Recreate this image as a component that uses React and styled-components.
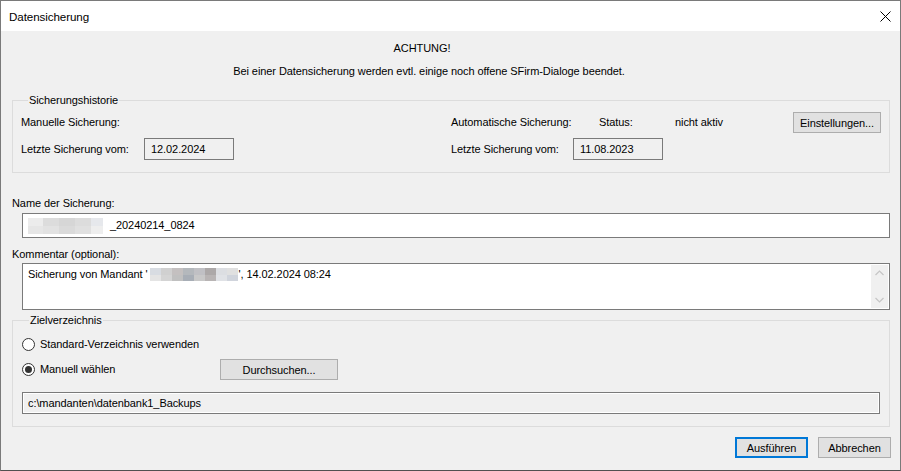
import React from "react";
import styled, { createGlobalStyle } from "styled-components";

const GlobalStyle = createGlobalStyle`
  html, body {
    margin: 0;
    padding: 0;
    background: #3a3a3a;
  }
  body {
    font-family: "Liberation Sans", Arial, sans-serif;
    font-size: 11px;
    letter-spacing: -0.08px;
    color: #000;
  }
`;

const Window = styled.div`
  width: 901px;
  height: 471px;
  box-sizing: border-box;
  border: 1px solid #7a7a7a;
  border-bottom-color: #505050;
  background: #f0f0f0;
  display: flex;
  flex-direction: column;
`;

const TitleBar = styled.div`
  height: 30px;
  flex-shrink: 0;
  background: #fff;
  display: flex;
  align-items: center;
  justify-content: space-between;
  padding: 0 10px 0 8px;
  font-size: 11.6px;
`;

const CloseButton = styled.div`
  width: 12px;
  height: 12px;
  display: flex;
  align-items: center;
  justify-content: center;
  margin-right: -1px;
`;

const Body = styled.div`
  flex: 1;
  display: flex;
  flex-direction: column;
  padding: 10px 10px 0 11px;
`;

const Notice = styled.div`
  line-height: 15px;
  text-align: center;
  padding-right: ${p => p.$shift}px;
  margin-bottom: ${p => p.$gap || 0}px;
`;

const Group = styled.fieldset`
  margin: ${p => p.$top}px 0 0 0;
  padding: ${p => p.$pad};
  border: 1px solid #dcdcdc;
  min-width: 0;
  display: flex;
  flex-direction: column;
  gap: ${p => p.$gap}px;
`;

const Legend = styled.legend`
  margin-left: 7px;
  padding: 0 1px;
  line-height: 15px;
`;

const Row = styled.div`
  display: flex;
  align-items: center;
  height: ${p => p.$h}px;
`;

const Cell = styled.div`
  width: ${p => p.$w}px;
  flex-shrink: 0;
  line-height: 15px;
  white-space: nowrap;
`;

const DateBox = styled.div`
  width: 90px;
  height: 22px;
  box-sizing: border-box;
  border: 1px solid #7a7a7a;
  background: #f0f0f0;
  padding: 3px 0 0 6px;
  line-height: 15px;
  flex-shrink: 0;
`;

const Button = styled.div`
  width: ${p => p.$w}px;
  height: 21px;
  box-sizing: border-box;
  background: #e1e1e1;
  border: ${p => (p.$primary ? "2px solid #0078d7" : "1px solid #adadad")};
  display: flex;
  align-items: center;
  justify-content: center;
  flex-shrink: 0;
`;

const FieldLabel = styled.div`
  line-height: 15px;
  margin-top: ${p => p.$top}px;
`;

const TextField = styled.div`
  margin: ${p => p.$top}px 0 0 10px;
  height: ${p => p.$h}px;
  box-sizing: border-box;
  border: 1px solid #7a7a7a;
  background: #fff;
  display: flex;
  align-items: ${p => (p.$multi ? "stretch" : "center")};
  padding-left: 5px;
  line-height: 15px;
`;

const FieldText = styled.div`
  flex: 1;
  display: flex;
  align-items: ${p => (p.$multi ? "flex-start" : "center")};
  padding-top: ${p => (p.$multi ? 3 : 0)}px;
  white-space: nowrap;
`;

const Blur = styled.div`
  display: grid;
  grid-template-columns: ${p => p.$cols};
  grid-auto-rows: ${p => p.$rowH}px;
  margin: ${p => p.$mt || 0}px ${p => p.$mr}px 0 ${p => p.$ml}px;
`;

const BlurCell = styled.div`
  background: ${p => p.$c};
`;

const ScrollBar = styled.div`
  width: 17px;
  background: #f0f0f0;
  margin: 1px 1px 1px 0;
  display: flex;
  flex-direction: column;
  justify-content: space-between;
  align-items: center;
  padding: 5px 0;
`;

const RadioRow = styled.div`
  display: flex;
  align-items: center;
  height: ${p => p.$h}px;
`;

const RadioOption = styled.div`
  display: flex;
  align-items: center;
  gap: 5px;
  width: ${p => p.$w}px;
  flex-shrink: 0;
  line-height: 15px;
`;

const RadioCircle = styled.span`
  width: 13px;
  height: 13px;
  box-sizing: border-box;
  border-radius: 50%;
  border: 1px solid #333;
  background: #fff;
  display: flex;
  align-items: center;
  justify-content: center;
  &::after {
    content: "";
    width: 7px;
    height: 7px;
    border-radius: 50%;
    background: ${p => (p.$checked ? "#333" : "transparent")};
  }
`;

const PathBox = styled.div`
  height: 22px;
  box-sizing: border-box;
  border: 1px solid #7a7a7a;
  box-shadow: inset 0 0 0 1px #fff;
  background: #f0f0f0;
  display: flex;
  align-items: center;
  padding-left: 5px;
  margin-top: 6px;
`;

const Footer = styled.div`
  display: flex;
  justify-content: flex-end;
  gap: 10px;
  margin: 10px -1px 0 0;
`;

const nameBlur = [
  "#ececec", "#dcdcdc", "#d6d6d6", "#dcdcdc", "#e6e8ec",
  "#e6e6e6", "#e2e2e2", "#dadada", "#e0e0e0", "#eeeeee",
];

const commentBlur = [
  "#d8dce2", "#d0d0d0", "#c4c0c0", "#b4b8bc", "#c0c0c4", "#aca8a8", "#dcdee2", "#e0e0e0",
  "#e4e4e4", "#d4d4d4", "#c0c0c0", "#a8aeb6", "#c8c8c8", "#b8b4b4", "#e0e2e6", "#d0d4dc",
];

const Chevron = ({ up }) => (
  <svg width="9" height="6" viewBox="0 0 9 6">
    <path
      d={up ? "M0.5 5 L4.5 1 L8.5 5" : "M0.5 1 L4.5 5 L8.5 1"}
      fill="none"
      stroke="#c5c5c5"
      strokeWidth="1.2"
    />
  </svg>
);

const App = () => {
  return (
    <>
      <GlobalStyle />
      <Window>
        <TitleBar>
          <span>Datensicherung</span>
          <CloseButton>
            <svg width="11" height="11" viewBox="0 0 11 11">
              <path d="M0.5 0.5 L10.5 10.5 M10.5 0.5 L0.5 10.5" stroke="#000" strokeWidth="1" />
            </svg>
          </CloseButton>
        </TitleBar>

        <Body>
          <Notice $shift={58} $gap={8}>ACHTUNG!</Notice>
          <Notice $shift={44}>
            Bei einer Datensicherung werden evtl. einige noch offene SFirm-Dialoge beendet.
          </Notice>

          <Group $top={14} $pad="4px 7px 12px 8px" $gap={5}>
            <Legend>Sicherungshistorie</Legend>
            <Row $h={21}>
              <Cell $w={430}>Manuelle Sicherung:</Cell>
              <Cell $w={148}>Automatische Sicherung:</Cell>
              <Cell $w={76}>Status:</Cell>
              <Cell $w={118}>nicht aktiv</Cell>
              <Button $w={88}>Einstellungen...</Button>
            </Row>
            <Row $h={22}>
              <Cell $w={123}>Letzte Sicherung vom:</Cell>
              <DateBox>12.02.2024</DateBox>
              <Cell $w={217} />
              <Cell $w={122}>Letzte Sicherung vom:</Cell>
              <DateBox>11.08.2023</DateBox>
            </Row>
          </Group>

          <FieldLabel $top={23}>Name der Sicherung:</FieldLabel>
          <TextField $top={2} $h={25}>
            <FieldText>
              <Blur $cols="15px 16px 16px 16px 12px" $rowH={8} $ml={0} $mr={7}>
                {nameBlur.map((c, i) => (
                  <BlurCell key={i} $c={c} />
                ))}
              </Blur>
              _20240214_0824
            </FieldText>
          </TextField>

          <FieldLabel $top={9}>Kommentar (optional):</FieldLabel>
          <TextField $top={1} $h={47} $multi>
            <FieldText $multi>
              Sicherung von Mandant '
              <Blur $cols="repeat(8, 11px)" $rowH={6.5} $ml={2} $mr={1} $mt={1}>
                {commentBlur.map((c, i) => (
                  <BlurCell key={i} $c={c} />
                ))}
              </Blur>
              ', 14.02.2024 08:24
            </FieldText>
            <ScrollBar>
              <Chevron up />
              <Chevron />
            </ScrollBar>
          </TextField>

          <Group $top={3} $pad="8px 9px 12px 9px" $gap={6}>
            <Legend>Zielverzeichnis</Legend>
            <RadioRow $h={17}>
              <RadioOption $w={198}>
                <RadioCircle />
                Standard-Verzeichnis verwenden
              </RadioOption>
            </RadioRow>
            <RadioRow $h={21}>
              <RadioOption $w={198}>
                <RadioCircle $checked />
                Manuell wählen
              </RadioOption>
              <Button $w={118}>Durchsuchen...</Button>
            </RadioRow>
            <PathBox>c:\mandanten\datenbank1_Backups</PathBox>
          </Group>

          <Footer>
            <Button $w={73} $primary>Ausführen</Button>
            <Button $w={73}>Abbrechen</Button>
          </Footer>
        </Body>
      </Window>
    </>
  );
};

export default App;
